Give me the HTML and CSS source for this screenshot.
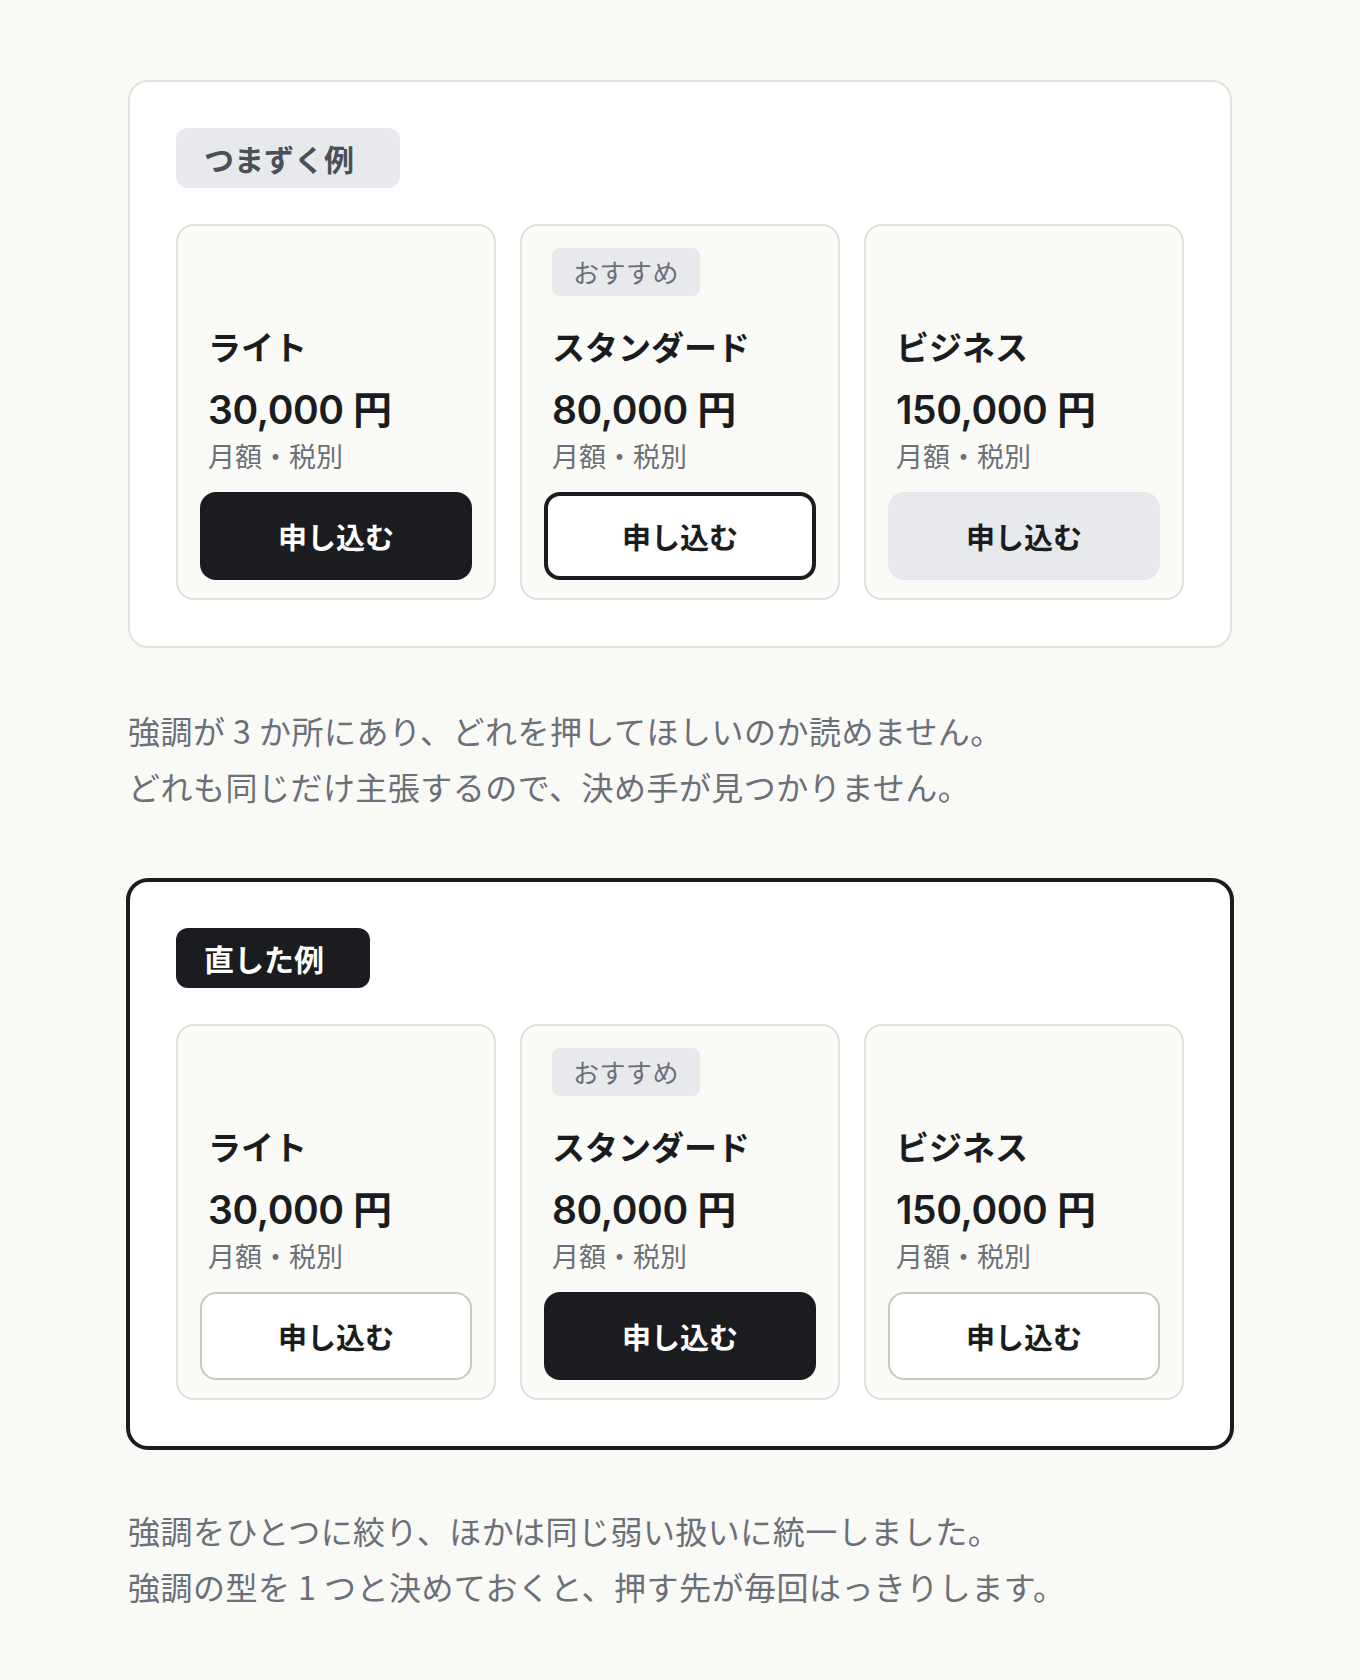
FILE: index.html
```html
<!DOCTYPE html>
<html lang="ja">
<head>
<meta charset="utf-8">
<title>料金プランの強調</title>
<link rel="stylesheet" href="styles.css">
</head>
<body>
<main class="page">

  <section class="example example--bad">
    <span class="label label--muted">つまずく例</span>
    <div class="plans">
      <article class="plan">
        <div class="tag-slot"></div>
        <div class="plan-info">
          <h3 class="plan-name">ライト</h3>
          <p class="plan-price">30,000 円</p>
          <p class="plan-note">月額・税別</p>
        </div>
        <button class="btn btn--solid">申し込む</button>
      </article>
      <article class="plan">
        <div class="tag-slot"><span class="tag">おすすめ</span></div>
        <div class="plan-info">
          <h3 class="plan-name">スタンダード</h3>
          <p class="plan-price">80,000 円</p>
          <p class="plan-note">月額・税別</p>
        </div>
        <button class="btn btn--heavy-outline">申し込む</button>
      </article>
      <article class="plan">
        <div class="tag-slot"></div>
        <div class="plan-info">
          <h3 class="plan-name">ビジネス</h3>
          <p class="plan-price">150,000 円</p>
          <p class="plan-note">月額・税別</p>
        </div>
        <button class="btn btn--tinted">申し込む</button>
      </article>
    </div>
  </section>

  <p class="caption">強調が 3 か所にあり、どれを押してほしいのか読めません。<br>どれも同じだけ主張するので、決め手が見つかりません。</p>

  <section class="example example--good">
    <span class="label label--strong">直した例</span>
    <div class="plans">
      <article class="plan">
        <div class="tag-slot"></div>
        <div class="plan-info">
          <h3 class="plan-name">ライト</h3>
          <p class="plan-price">30,000 円</p>
          <p class="plan-note">月額・税別</p>
        </div>
        <button class="btn btn--outline">申し込む</button>
      </article>
      <article class="plan">
        <div class="tag-slot"><span class="tag">おすすめ</span></div>
        <div class="plan-info">
          <h3 class="plan-name">スタンダード</h3>
          <p class="plan-price">80,000 円</p>
          <p class="plan-note">月額・税別</p>
        </div>
        <button class="btn btn--solid">申し込む</button>
      </article>
      <article class="plan">
        <div class="tag-slot"></div>
        <div class="plan-info">
          <h3 class="plan-name">ビジネス</h3>
          <p class="plan-price">150,000 円</p>
          <p class="plan-note">月額・税別</p>
        </div>
        <button class="btn btn--outline">申し込む</button>
      </article>
    </div>
  </section>

  <p class="caption">強調をひとつに絞り、ほかは同じ弱い扱いに統一しました。<br>強調の型を 1 つと決めておくと、押す先が毎回はっきりします。</p>

</main>
</body>
</html>
```

FILE: styles.css
```css
* {
  box-sizing: border-box;
}

html,
body {
  margin: 0;
  background: #f9f9f6;
}

body {
  font-family: "Noto Sans CJK JP", "Noto Sans", sans-serif;
  color: #1b1c20;
}

.page {
  width: 1104px;
  margin: 0 auto;
  padding: 80px 0 40px;
}

/* outer example panels */
.example {
  display: flex;
  flex-direction: column;
  align-items: flex-start;
  background: #ffffff;
  border: 2px solid #e3e3dd;
  border-radius: 20px;
  padding: 46px;
}

.example--good {
  margin-top: 66px;
  border-color: #1b1c20;
  box-shadow: 0 0 0 2px #1b1c20;
}

.label {
  display: inline-flex;
  align-items: center;
  height: 60px;
  padding: 0 46px 0 28px;
  border-radius: 12px;
  font-size: 30px;
  font-weight: 700;
  line-height: 1;
}

.label--muted {
  background: #e8e9ec;
  color: #4b4f58;
}

.label--strong {
  background: #1b1c20;
  color: #ffffff;
}

/* plan cards */
.plans {
  margin-top: 36px;
  width: 100%;
  display: grid;
  grid-template-columns: repeat(3, 320px);
  gap: 24px;
}

.plan {
  display: flex;
  flex-direction: column;
  height: 376px;
  background: #fafaf7;
  border: 2px solid #e3e3dd;
  border-radius: 18px;
  padding: 22px 22px 18px;
}

.tag-slot {
  height: 48px;
  padding: 0 8px;
}

.tag {
  display: inline-flex;
  align-items: center;
  height: 48px;
  padding: 0 21px;
  border-radius: 8px;
  background: #e8e9ec;
  color: #6b6f78;
  font-size: 26px;
  letter-spacing: 0.02em;
  line-height: 1;
}

.plan-info {
  padding: 0 8px;
  margin-top: 28px;
}

.plan-name {
  margin: 0;
  font-size: 33px;
  font-weight: 700;
  line-height: 44px;
}

.plan-price {
  margin: 18px 0 0;
  font-family: Inter, "Noto Sans CJK JP", sans-serif;
  font-size: 39px;
  font-weight: 600;
  line-height: 48px;
  letter-spacing: -0.01em;
}

.plan-note {
  margin: 2px 0 0;
  font-size: 27px;
  line-height: 40px;
  color: #6b6f78;
}

/* buttons */
.btn {
  margin-top: auto;
  width: 100%;
  height: 88px;
  border-radius: 16px;
  font-family: inherit;
  font-size: 29px;
  font-weight: 700;
  border: 0;
  padding: 0;
}

.btn--solid {
  background: #1b1c20;
  color: #ffffff;
}

.btn--heavy-outline {
  background: #ffffff;
  color: #1b1c20;
  border: 4px solid #1b1c20;
}

.btn--tinted {
  background: #e8e9ec;
  color: #1b1c20;
}

.btn--outline {
  background: #ffffff;
  color: #1b1c20;
  border: 2px solid #c9c9c2;
}

/* notes under each example */
.caption {
  margin: 54px 0 0;
  font-size: 32px;
  line-height: 56px;
  letter-spacing: 0.015em;
  color: #6b6f78;
}
```
